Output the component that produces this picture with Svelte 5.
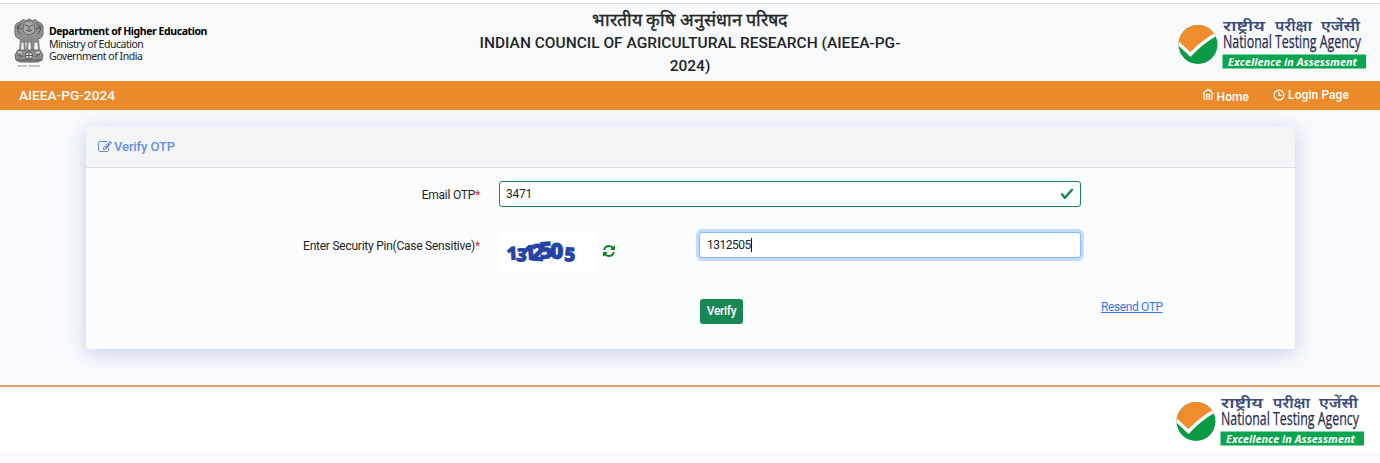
<script>
	let otp = '3471'
	let pin = '1312505'

	// each captcha digit: horizontal position, baseline, tilt, size
	const captcha = [
		{ x: 8, y: 28, tilt: -3, size: 18 },
		{ x: 17, y: 29, tilt: 4, size: 18 },
		{ x: 25, y: 28, tilt: -4, size: 20 },
		{ x: 31, y: 28, tilt: 5, size: 23 },
		{ x: 41, y: 27, tilt: -5, size: 23 },
		{ x: 51, y: 27, tilt: 0, size: 23 },
		{ x: 65, y: 29, tilt: 3, size: 19 },
	]
</script>

{#snippet ntaLogo()}
	<svg class="nta" viewBox="0 0 190 56" role="img" aria-label="National Testing Agency">
		<defs>
			<clipPath id="disc"><circle cx="20" cy="29.5" r="19.5" /></clipPath>
		</defs>
		<g clip-path="url(#disc)">
			<path d="M0 9h40v42H0z" fill="#0b9a46" />
			<path d="M0 9h40v9Q24 27 12.500 39L0 29z" fill="#f18c2c" />
			<path d="M0 28L12.500 39.500Q24 27 40 18" fill="none" stroke="#fff" stroke-width="3.400" />
		</g>
		<text class="hindi" x="45" y="16" textLength="42" lengthAdjust="spacingAndGlyphs">राष्ट्रीय</text>
		<text class="hindi" x="97" y="16" textLength="37" lengthAdjust="spacingAndGlyphs">परीक्षा</text>
		<text class="hindi" x="143" y="16" textLength="39" lengthAdjust="spacingAndGlyphs">एजेंसी</text>
		<text class="name" x="45" y="33" textLength="138" lengthAdjust="spacingAndGlyphs">National Testing Agency</text>
		<path d="M44.500 39.500h143.500v14H44.500z" fill="#08a550" />
		<text class="motto" x="50" y="50.500" textLength="129" lengthAdjust="spacingAndGlyphs">Excellence in Assessment</text>
	</svg>
{/snippet}

<div class="page">
	<header>
		<div class="ministry">
			<svg class="emblem" viewBox="0 0 32 50" aria-hidden="true">
				<path d="M7 4Q10 0 13 3Q16-1 19 3Q23 0 25 4Q31 5 30 12Q31 20 25 21L24 24H8L7 21Q1 20 2 12Q1 5 7 4Z" fill="#929292" stroke="#6b6b6b" />
				<path d="M11 5Q16 1 21 5L22 13Q16 21 10 13Z" fill="#a8a8a8" stroke="#6b6b6b" />
				<path d="M12 7l3 1m5-1l-3 1m-4 4q3 3 6 0M5 7q-2 5 2 9M27 7q2 5-2 9M8 5l-3 5 4 1m15-6l3 5-4 1M16 8v5" fill="none" stroke="#505050" />
				<path d="M8 21l-1 12M11 20l1 14M15 19l-1 15M18 19l1 15M21 20l-1 14M25 21l1 12" stroke="#858585" stroke-width="2" />
				<path d="M5 32h22l3 5-1 5-4 2H7l-4-2-1-5z" fill="#8c8c8c" stroke="#666" />
				<circle cx="16" cy="37.500" r="3.600" fill="#ddd" stroke="#555" />
				<path d="M16 34v7m-3.500-3.500h7M5 37l5 2m12 0l5-3M4 42h24" stroke="#555" />
				<path d="M5 34l4 1m14 0l4-1" stroke="#eee" />
				<path d="M5 48h9m2 0h11" stroke="#777" stroke-width="1.200" stroke-dasharray="2 .6" />
			</svg>
			<div>
				<strong>Department of Higher Education</strong>
				<span>Ministry of Education</span>
				<span>Government of India</span>
			</div>
		</div>
		<h1>
			<span class="council-hi">भारतीय कृषि अनुसंधान परिषद</span>
			<span>INDIAN COUNCIL OF AGRICULTURAL RESEARCH (AIEEA-PG-</span>
			<span>2024)</span>
		</h1>
		<div class="brand">{@render ntaLogo()}</div>
	</header>

	<nav>
		<b>AIEEA-PG-2024</b>
		<a class="home" href="#home">
			<svg viewBox="0 0 12 12" aria-hidden="true">
				<path d="M.7 5.800L6 1.200l5.300 4.600M2 5v6h8V5M4.500 9V6.500h3V9zM8.800 3V1.500" />
			</svg>
			Home
		</a>
		<a class="login" href="#login">
			<svg viewBox="0 0 12 12" aria-hidden="true">
				<circle cx="6" cy="6" r="4.900" />
				<path d="M6 3v3.300h2.600" />
			</svg>
			Login Page
		</a>
	</nav>

	<main>
		<section class="card">
			<h2>
				<svg viewBox="0 0 1792 1792" aria-hidden="true">
					<path d="M888 1184l116-116-152-152-116 116v56h96v96h56zm440-720q-16-16-33 1l-350 350q-17 17-1 33t33-1l350-350q17-17 1-33zm80 594v190q0 119-84.5 203.5t-203.5 84.5h-832q-119 0-203.5-84.5t-84.5-203.5v-832q0-119 84.5-203.5t203.5-84.5h832q63 0 117 25 15 7 18 23 3 17-9 29l-49 49q-14 14-32 8-23-6-45-6h-832q-66 0-113 47t-47 113v832q0 66 47 113t113 47h832q66 0 113-47t47-113v-126q0-13 9-22l64-64q15-15 35-7t20 29zm-96-738l288 288-672 672h-288v-288zm444 132l-92 92-288-288 92-92q28-28 68-28t68 28l152 152q28 28 28 68t-28 68z" />
				</svg>
				Verify OTP
			</h2>
			<form on:submit|preventDefault>
				<div class="row otp">
					<label for="otp">Email OTP<i>*</i></label>
					<div class="field valid">
						<input id="otp" bind:value={otp} />
						<svg viewBox="0 0 8 8" aria-hidden="true">
							<path d="M2.3 6.73.6 4.53c-.4-1.040.46-1.400 1.100-.8l1.100 1.400 3.400-3.800c.6-.63 1.600-.27 1.200.7l-4 4.600c-.43.5-.8.4-1.100.1z" />
						</svg>
					</div>
				</div>
				<div class="row security">
					<label for="pin">Enter Security Pin(Case Sensitive)<i>*</i></label>
					<svg class="captcha" viewBox="0 0 96 41" role="img" aria-label="Security pin">
						{#each captcha as digit, idx}
							<text font-size={digit.size} transform="translate({digit.x} {digit.y}) rotate({digit.tilt})">{pin[idx]}</text>
						{/each}
					</svg>
					<button class="refresh" type="button" aria-label="Refresh">
						<svg viewBox="0 0 1792 1792" aria-hidden="true">
							<path d="M1639 1056q0 5-1 7-64 268-268 434.5t-478 166.5q-146 0-282.5-55t-243.5-157l-129 129q-19 19-45 19t-45-19-19-45v-448q0-26 19-45t45-19h448q26 0 45 19t19 45-19 45l-137 137q71 66 161 102t187 36q134 0 250-65t186-179q11-17 53-117 8-23 30-23h192q13 0 22.5 9.5t9.5 22.5zm25-800v448q0 26-19 45t-45 19h-448q-26 0-45-19t-19-45 19-45l138-138q-148-137-349-137-134 0-250 65t-186 179q-11 17-53 117-8 23-30 23h-199q-13 0-22.5-9.5t-9.5-22.5v-7q65-268 270-434.5t480-166.5q146 0 284 55.5t245 156.5l130-129q19-19 45-19t45 19 19 45z" />
						</svg>
					</button>
					<div class="field focused"><span>{pin}</span><span class="caret"></span></div>
				</div>
				<div class="actions">
					<button class="verify">Verify</button>
					<a href="#resend">Resend OTP</a>
				</div>
			</form>
		</section>
	</main>

	<footer>{@render ntaLogo()}</footer>
</div>

<style>
	:global(body) {
		background: #f8f9fd;
	}

	.page {
		height: 463px;
		overflow: hidden;
		box-sizing: border-box;
		color: #212529;
		font: 12px/18px Roboto, sans-serif;
		letter-spacing: -0.24px;
		border-top: 3px solid #fff;
	}

	header {
		height: 78px;
		display: grid;
		grid-template-columns: 460px 460px 460px;
		box-sizing: border-box;
		border-top: 1px solid #dcdedf;
		background: #f8f9fb;
	}

	.ministry {
		display: flex;
		padding: 14px 0 0 13px;
	}

	.emblem {
		width: 32px;
		height: 50px;
	}

	.ministry div {
		display: flex;
		flex-direction: column;
		padding: 7px 0 0 4px;
		color: #222;
		font: 10.500px/12.500px 'Noto Sans', sans-serif;
		letter-spacing: -0.42px;
	}

	.ministry span {
		letter-spacing: -0.48px;
	}

	.ministry strong {
		color: #000;
	}

	h1 {
		display: flex;
		flex-direction: column;
		margin: 0;
		padding-top: 4px;
		text-align: center;
		font-size: 15.500px;
		font-weight: 500;
		line-height: 23.500px;
		letter-spacing: 0;
	}

	.council-hi {
		font-size: 17.900px;
		-webkit-text-stroke: 0.35px #212529;
	}

	.nta {
		display: block;
		width: 190px;
		height: 56px;
		overflow: visible;
		letter-spacing: 0;
	}

	.brand {
		padding: 11px 0 0 258px;
	}

	.hindi {
		fill: #3c4d7c;
		font: 600 15px 'Noto Sans Devanagari', 'Noto Sans', sans-serif;
	}

	.name {
		fill: #232b50;
		stroke: #232b50;
		stroke-width: 0.25;
		font: 19px 'Open Sans', sans-serif;
	}

	.motto {
		fill: #fff;
		font: italic 700 10px 'Open Sans', sans-serif;
	}

	nav {
		height: 29px;
		display: flex;
		align-items: center;
		box-sizing: border-box;
		padding: 0 31px 1px 19px;
		color: #fff;
		background: #eb8a2a;
		font-size: 12px;
		letter-spacing: 0.08px;
	}

	nav b {
		margin-right: auto;
		padding-bottom: 1px;
		font-size: 13.700px;
		font-weight: 500;
		letter-spacing: 0;
	}

	nav a {
		display: flex;
		align-items: center;
		gap: 3px;
		color: #fff;
		font-weight: 500;
		text-decoration: none;
	}

	nav svg {
		width: 12px;
		height: 12px;
		fill: none;
		stroke: #fff;
		stroke-width: 1.2;
	}

	.home {
		padding-top: 3px;
		margin-right: 24px;
	}

	.home svg {
		margin-bottom: 5px;
	}

	main {
		height: 275px;
		box-sizing: border-box;
		padding: 16px 85px 0 86px;
	}

	.card {
		height: 223px;
		border-radius: 4px;
		background: #fbfcfe;
		box-shadow: 0 4px 20px #c3cee6;
	}

	h2 {
		height: 42px;
		display: flex;
		align-items: center;
		gap: 2px;
		box-sizing: border-box;
		margin: 0;
		padding: 0 12px;
		color: #6790df;
		background: #f3f4f6;
		border-bottom: 1px solid #dce0e4;
		border-radius: 4px 4px 0 0;
		font-size: 13px;
		font-weight: 500;
		letter-spacing: -0.1px;
	}

	h2 svg {
		width: 14px;
		height: 14px;
		fill: currentColor;
	}

	.row {
		display: flex;
	}

	.otp {
		padding-top: 13px;
	}

	label {
		width: 394px;
		margin-right: 19px;
		padding-top: 5px;
		text-align: right;
	}

	label i {
		color: #e52732;
		font-style: normal;
	}

	.field {
		height: 26px;
		display: flex;
		align-items: center;
		box-sizing: border-box;
		padding: 0 6px;
		border: 1px solid #198754;
		border-radius: 3px;
		background: #fff;
	}

	.valid {
		width: 582px;
	}

	.field svg {
		width: 14px;
		height: 14px;
		fill: #198754;
	}

	input {
		flex: 1;
		min-width: 0;
		padding: 0;
		border: 0;
		outline: 0;
		color: #212529;
		background: none;
		font: inherit;
		letter-spacing: inherit;
	}

	.security {
		padding-top: 25px;
	}

	.captcha {
		width: 96px;
		height: 41px;
		background: #fff;
		letter-spacing: 0;
	}

	.captcha text {
		fill: #2444a5;
		stroke: #2444a5;
		stroke-width: 0.8;
		font-family: 'Open Sans', sans-serif;
		font-weight: 800;
	}

	.refresh {
		width: 14px;
		height: 14px;
		margin: 12px 83px 0 7px;
		padding: 0;
		border: 0;
		background: none;
		fill: #118525;
	}

	.refresh svg {
		display: block;
	}

	.focused {
		width: 382px;
		padding-left: 7px;
		border-color: #86b7fe;
		box-shadow: 0 0 0 3px #c2dbfe;
		letter-spacing: -0.5px;
	}

	.caret {
		width: 1px;
		height: 14px;
		background: #111;
	}

	.actions {
		display: flex;
		padding: 26px 0 0 614px;
	}

	.verify {
		width: 43px;
		height: 25px;
		padding: 0 0 2px;
		border: 0;
		border-radius: 3px;
		color: #fff;
		background: #198754;
		font: 500 12px Roboto, sans-serif;
		letter-spacing: -0.3px;
	}

	.actions a {
		margin: -1px 0 0 358px;
		color: #3976e9;
		letter-spacing: -0.38px;
	}

	footer {
		height: 66px;
		box-sizing: border-box;
		padding: 5px 0 0 1176px;
		border-top: 2px solid #d6a66a;
		background: #fff;
	}
</style>
